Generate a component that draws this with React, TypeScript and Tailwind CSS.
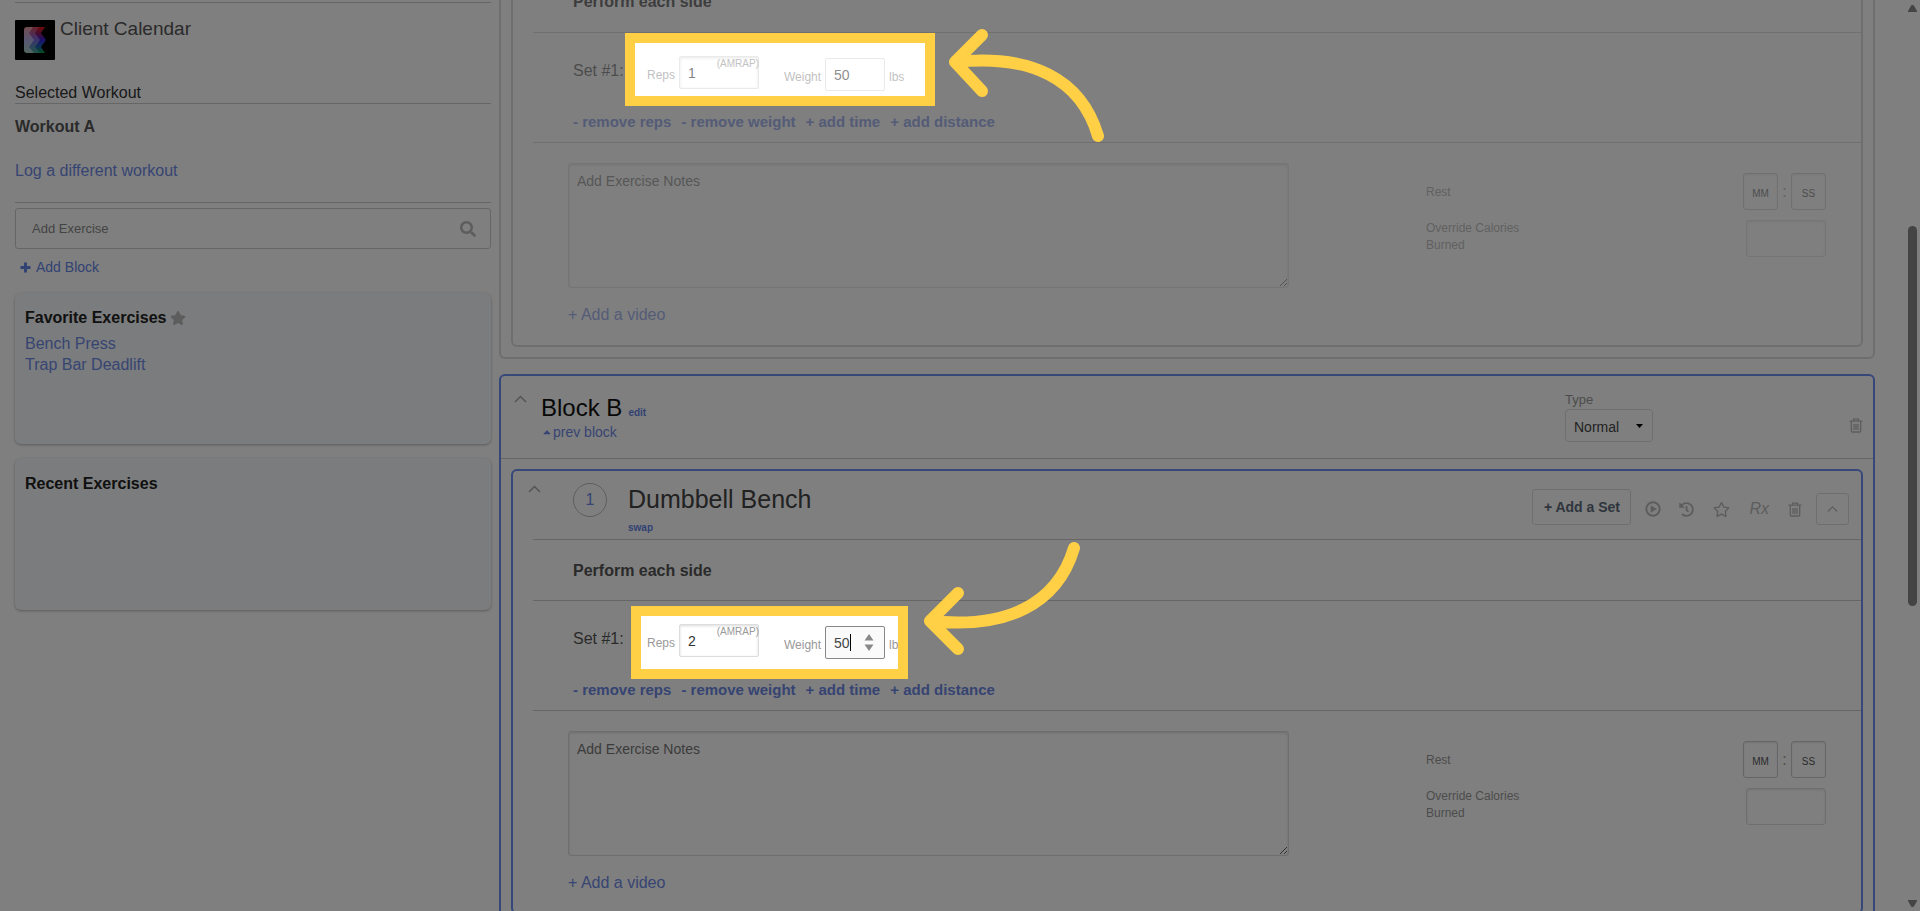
import { useState } from "react";
import { FaSearch, FaStar, FaRegStar, FaHistory, FaCaretUp } from "react-icons/fa";

const favorites = ["Bench Press", "Trap Bar Deadlift"];
const fieldLinks = ["- remove reps", "- remove weight", "+ add time", "+ add distance"];

const YELLOW = "#ffd045";

const Chevron = ({ className = "" }: { className?: string }) => (
  <svg className={className} width="13" height="8" viewBox="0 0 13 8" fill="none" stroke="currentColor" strokeWidth="1.5">
    <path d="M1 7 L6.5 1.5 L12 7" />
  </svg>
);

const Plus = () => (
  <svg width="11" height="11" viewBox="0 0 11 11" fill="currentColor">
    <path d="M4 0.5h3V4h3.5v3H7v3.5H4V7H0.5V4H4Z" />
  </svg>
);

const Trash = () => (
  <svg width="14" height="15" viewBox="0 0 14 15" fill="none" stroke="currentColor" strokeWidth="1.3">
    <path d="M0.5 3.2H13.5M4.5 3V1.2h5V3M2.3 3.5V13a1 1 0 0 0 1 1h7.4a1 1 0 0 0 1-1V3.5M5 6v6M7 6v6M9 6v6" />
  </svg>
);

const PlayCircle = () => (
  <svg width="16" height="16" viewBox="0 0 16 16" fill="none">
    <circle cx="8" cy="8" r="6.7" stroke="currentColor" strokeWidth="2" />
    <path d="M5.6 4.2 L12 8 L5.6 11.8Z" fill="currentColor" />
  </svg>
);

const Logo = () => (
  <svg width="40" height="40" viewBox="0 0 40 40" className="shrink-0">
    <defs>
      <linearGradient id="bandLight" x1="0" y1="0" x2="0" y2="1">
        <stop offset="0" stopColor="#e89aa0" />
        <stop offset="0.5" stopColor="#b0aee6" />
        <stop offset="1" stopColor="#a4cfc0" />
      </linearGradient>
      <linearGradient id="bandMid" x1="0" y1="0" x2="0" y2="1">
        <stop offset="0" stopColor="#d8485c" />
        <stop offset="0.5" stopColor="#7468dc" />
        <stop offset="1" stopColor="#3fa890" />
      </linearGradient>
      <linearGradient id="bandDark" x1="0" y1="0" x2="0" y2="1">
        <stop offset="0" stopColor="#e01a10" />
        <stop offset="0.25" stopColor="#8a1860" />
        <stop offset="0.5" stopColor="#3420d8" />
        <stop offset="0.75" stopColor="#1a60b0" />
        <stop offset="1" stopColor="#0a9a3c" />
      </linearGradient>
    </defs>
    <rect width="40" height="40" rx="1" fill="#000" />
    <path d="M12 7H30L26 13L31 20L26 27L30 33H12Z" fill="url(#bandDark)" />
    <path d="M12 7H24L20 13L25 20L20 27L25 33H12Z" fill="url(#bandMid)" />
    <path d="M12 7H18L14 13L19 20L14 27L19 33H12a3 3 0 0 1-3-3V10a3 3 0 0 1 3-3Z" fill="url(#bandLight)" />
  </svg>
);

const Sidebar = () => (
  <aside className="w-[476px] shrink-0 pt-[2px]">
    <div className="border-t border-[#ccc] pt-[17px] flex items-start gap-[5px]">
      <Logo />
      <h1 className="text-[19px] leading-[18px] text-[#555]">Client Calendar</h1>
    </div>
    <h2 className="mt-[22px] text-base leading-[21px] text-[#333] border-b border-[#ccc]">Selected Workout</h2>
    <h3 className="mt-[13px] text-base leading-[20px] font-bold text-[#555]">Workout A</h3>
    <a href="#log" className="mt-6 block text-base leading-5 text-[#6f8ae6]">Log a different workout</a>
    <div className="mt-[21px] border-t border-[#ccc] pt-[5px]">
      <label className="flex h-[41px] items-center rounded-[3px] border border-[#ccc] pl-4 pr-3.5">
        <input aria-label="Add Exercise" placeholder="Add Exercise" className="min-w-0 flex-1 text-[13px] outline-none placeholder:text-[#888]" />
        <FaSearch className="size-4 text-[#bbb]" />
      </label>
    </div>
    <button className="mt-2 ml-[5px] flex items-center gap-[5px] text-sm leading-5 text-[#6484e6]">
      <Plus />
      Add Block
    </button>
    <section className="mt-4 h-[151px] rounded-md bg-[#f6f8fa] px-[10px] pt-[15px] shadow-[0_1px_3px_rgba(0,0,0,0.3)]">
      <h3 className="flex items-center gap-1 text-base leading-5 font-bold text-[#222]">
        Favorite Exercises
        <FaStar className="size-4 text-[#bbb]" />
      </h3>
      <ul className="mt-[5px]">
        {favorites.map((name) => (
          <li key={name}>
            <a href="#exercise" className="block text-base leading-[21px] text-[#6f8ae6]">{name}</a>
          </li>
        ))}
      </ul>
    </section>
    <section className="mt-[14px] h-[152px] rounded-md bg-[#f6f8fa] px-[10px] pt-4 shadow-[0_1px_3px_rgba(0,0,0,0.3)]">
      <h3 className="text-base leading-5 font-bold text-[#222]">Recent Exercises</h3>
    </section>
  </aside>
);

type SetRowProps = { reps: string; weight: string; active?: boolean };

const SetRow = ({ reps, weight, active }: SetRowProps) => {
  const [repsValue, setRepsValue] = useState(reps);
  const [weightValue, setWeightValue] = useState(weight);

  return (
    <div className="ml-5 border-t border-[#ccc] pl-10 h-[110px]">
      <div className="flex items-start pt-[23px]">
        <span className="mt-1 w-[74px] text-base leading-[22px] text-[#555]">Set #1:</span>
        <label className="relative flex items-center gap-1 text-xs text-[#999]">
          <span className="w-[28px] mt-1">Reps</span>
          <input
            value={repsValue}
            onChange={(e) => setRepsValue(e.target.value)}
            className="h-[33px] w-20 rounded-xs border border-[#ddd] px-2 text-sm text-[#333] shadow-[inset_0_1px_3px_rgba(0,0,0,0.15)] outline-none"
          />
          <span className="absolute right-0 top-px text-[10px] leading-[14px]">(AMRAP)</span>
        </label>
        <label className="mt-[2px] ml-[25px] flex items-center gap-[3px] text-xs text-[#999]">
          <span className="w-[38px] mt-1 whitespace-nowrap">Weight</span>
          <span className={active ? "flex h-[33px] w-[60px] items-center rounded-xs border border-[#888] bg-[#fafafa] px-2" : "flex h-[33px] w-[60px] items-center rounded-xs border border-[#ddd] px-2"}>
            <input
              aria-label="Weight"
              value={weightValue}
              onChange={(e) => setWeightValue(e.target.value)}
              className="w-4 text-sm text-[#444] outline-none"
            />
            {active && (
              <>
                <span className="h-[17px] w-px bg-black" />
                <svg className="ml-[13px]" width="10" height="17" viewBox="0 0 10 17" fill="#888">
                  <path d="M0.5 6.5L5 0L9.5 6.5ZM0.5 10.5H9.5L5 17Z" />
                </svg>
              </>
            )}
          </span>
          <span className="mt-1 ml-px">lbs</span>
        </label>
      </div>
      <div className="mt-[22px] flex gap-[10px] text-[15px] leading-[18px] font-bold text-[#6d88e4]">
        {fieldLinks.map((text) => (
          <button key={text}>{text}</button>
        ))}
      </div>
    </div>
  );
};

const timeInput =
  "h-[37px] w-[35px] rounded-[3px] border border-[#ccc] pt-[3px] text-center text-[10px] outline-none placeholder:text-[#555] shadow-[inset_0_1px_2px_rgba(0,0,0,0.1)]";

const Notes = ({ id }: { id: string }) => (
  <div className="ml-5 flex border-t border-[#ccc] pt-5 pr-[35px]">
    <div className="ml-[35px] w-[721px] shrink-0">
      <textarea
        aria-label="Exercise notes"
        placeholder="Add Exercise Notes"
        className="block h-[125px] w-full resize rounded-[3px] border border-[#ddd] px-2 py-[7px] text-sm shadow-[inset_0_1px_3px_rgba(0,0,0,0.15)] outline-none placeholder:text-[#777]"
      />
      <button className="mt-4 block text-base leading-[22px] text-[#6f8ae6]">+ Add a video</button>
    </div>
    <div className="ml-[137px] flex-1 pt-[10px] text-xs text-[#999]">
      <div className="flex h-[37px] items-center">
        <label htmlFor={`${id}-rest`} className="flex-1">Rest</label>
        <input id={`${id}-rest`} placeholder="MM" className={timeInput} />
        <span className="w-[13px] text-center text-base">:</span>
        <input aria-label="Rest seconds" placeholder="SS" className={timeInput} />
      </div>
      <label className="mt-[10px] flex items-start justify-between">
        <span className="w-[110px] leading-[17px]">Override Calories Burned</span>
        <input className="h-[37px] w-20 rounded-[3px] border border-[#ddd] outline-none shadow-[inset_0_1px_3px_rgba(0,0,0,0.1)]" />
      </label>
    </div>
  </div>
);

const ExerciseHeader = () => (
  <>
    <header className="flex h-[68px] pr-3">
      <button aria-label="Collapse exercise" className="mt-[14px] ml-[15px] h-2 text-[#aaa]"><Chevron /></button>
      <span className="mt-3 ml-8 flex size-[34px] items-center justify-center rounded-full border border-[#bbb] text-base text-[#6f8ae6]">1</span>
      <div className="ml-[21px] flex-1 pt-[11px]">
        <h3 className="text-[25px] leading-[34px] text-[#444]">Dumbbell Bench</h3>
        <button className="block mt-[6px] text-[10px] leading-3 font-bold text-[#6484e6]">swap</button>
      </div>
      <div className="flex items-center pb-2 pt-4 text-[#bbb]">
        <button className="-mt-1 h-9 w-[99px] rounded-[3px] border border-[#ddd] text-sm font-bold text-[#5d6b7b]">+ Add a Set</button>
        <button aria-label="Play" className="ml-[14px]"><PlayCircle /></button>
        <button aria-label="History" className="ml-[18px]"><FaHistory className="size-[15px]" /></button>
        <button aria-label="Favorite" className="ml-[19px]"><FaRegStar className="size-[17px]" /></button>
        <button className="ml-[19px] text-base italic">Rx</button>
        <button aria-label="Delete exercise" className="ml-[19px]"><Trash /></button>
        <button aria-label="Hide exercise" className="ml-[14px] flex h-8 w-[33px] items-center justify-center rounded-[3px] border border-[#ddd]">
          <Chevron className="w-[11px]" />
        </button>
      </div>
    </header>
    <div className="ml-5 h-[61px] border-t border-[#ccc] pt-[21px] pl-10 text-base leading-5 font-bold text-[#555]">Perform each side</div>
  </>
);

const BlockB = () => (
  <section className="mt-[15px] rounded-md border-2 border-[#6c90f2] px-[10px]">
    <header className="-mx-[10px] flex h-[83px] border-b border-[#ccc] pr-[10px]">
      <button aria-label="Collapse block" className="mt-[19px] ml-[13px] h-2 text-[#aaa]"><Chevron /></button>
      <div className="ml-[14px] flex-1 pt-4">
        <h2 className="flex items-baseline gap-1.5 text-[24px] leading-8 text-[#111]">
          Block B
          <button className="text-[10px] leading-3 font-bold text-[#6484e6]">edit</button>
        </h2>
        <button className="flex items-center text-sm leading-4 text-[#6f8ae6]">
          <FaCaretUp className="size-3" />
          prev block
        </button>
      </div>
      <div className="w-[298px] pt-[15px] text-[#bbb]">
        <label htmlFor="type" className="block text-[13px] leading-[18px] text-[#999]">Type</label>
        <div className="relative flex h-[33px] items-center">
          <select id="type" className="h-[33px] w-[88px] appearance-none rounded border border-[#ddd] pt-0.5 pl-2 text-sm text-[#444] outline-none">
            <option>Normal</option>
          </select>
          <svg className="absolute left-[71px]" width="7" height="4" viewBox="0 0 7 4" fill="#000"><path d="M0 0H7L3.5 4Z" /></svg>
          <button aria-label="Delete block" className="ml-auto"><Trash /></button>
        </div>
      </div>
    </header>
    <article className="mt-[10px] rounded-md border-2 border-[#6c90f2] h-[445px]">
      <ExerciseHeader />
      <SetRow reps="2" weight="50" active />
      <Notes id="b" />
    </article>
  </section>
);

// The first block is scrolled partly off the top of the window
const BlockA = () => (
  <section className="flex h-[359px] flex-col justify-end overflow-hidden rounded-b-md border-x-2 border-b-2 border-[#ddd] px-[10px] pb-[10px]">
    <article className="flex h-[347px] flex-col justify-end rounded-b-md border-x-2 border-b-2 border-[#ddd]">
      <div className="h-[345px] opacity-60">
        <div className="-mt-[29px] h-[61px] pt-[21px] pl-[60px] text-base leading-5 font-bold text-[#222]">Perform each side</div>
        <SetRow reps="1" weight="50" />
        <Notes id="a" />
      </div>
    </article>
  </section>
);

const TourOverlay = () => (
  <svg className="pointer-events-none absolute inset-0 h-full w-full" fill="none">
    <path d="M0 0H6000V3000H0ZM635 43V96H925V43ZM641 616V669H898V616Z" fill="#000" fillOpacity="0.5" fillRule="evenodd" />
    <g stroke={YELLOW} strokeWidth="10">
      <rect x="630" y="38" width="300" height="63" />
      <rect x="636" y="611" width="267" height="63" />
    </g>
    <g stroke={YELLOW} strokeWidth="12" strokeLinecap="round" strokeLinejoin="round">
      <path d="M982 35L955 62L982 91M955 62C1030 54 1081 78 1098 136" />
      <path d="M958 593L930 621L958 649M930 621C1006 629 1057 605 1074 548" />
    </g>
  </svg>
);

const Scrollbar = () => (
  <div className="flex w-[15px] shrink-0 flex-col items-center justify-between">
    <svg className="mt-[5px]" width="9" height="7" viewBox="0 0 9 7" fill="#888"><path d="M0 7V6L3.5 0H5.5L9 6V7Z" /></svg>
    <div className="mb-20 h-[380px] w-[9px] rounded-full bg-[#888]" />
    <svg className="mb-1" width="9" height="7" viewBox="0 0 9 7" fill="#888"><path d="M0 0H9V1L5.5 7H3.5L0 1Z" /></svg>
  </div>
);

export default function App() {
  return (
    <div className="relative flex h-screen overflow-hidden bg-white pl-[15px] font-['Liberation_Sans',Arial,sans-serif]">
      <Sidebar />
      <main className="mr-[30px] ml-2 min-w-0 flex-1">
        <BlockA />
        <BlockB />
      </main>
      <Scrollbar />
      <TourOverlay />
    </div>
  );
}
